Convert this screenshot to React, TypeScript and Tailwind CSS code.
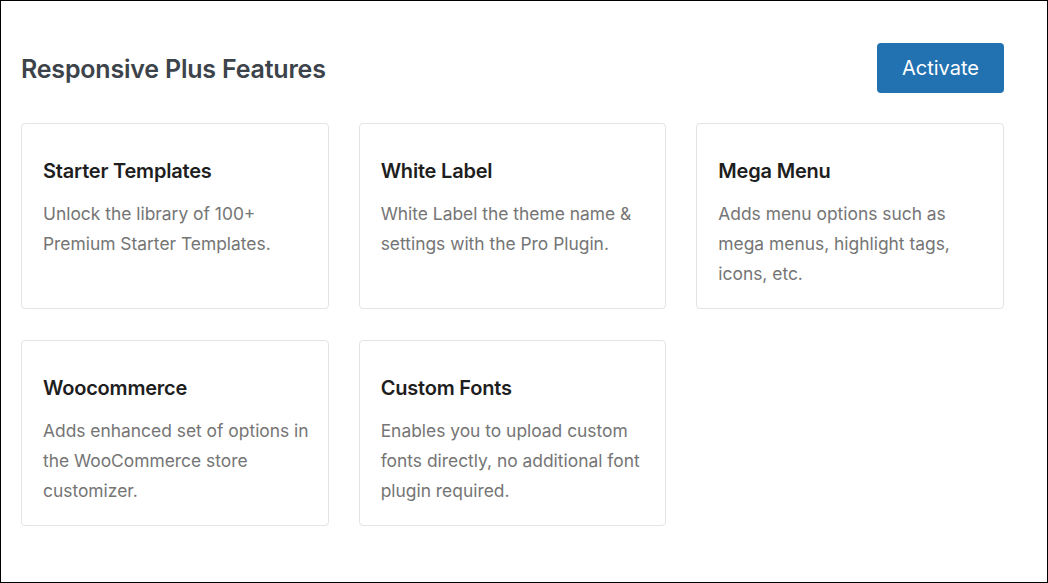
const features = [
  {
    title: "Starter Templates",
    description: "Unlock the library of 100+ Premium Starter Templates.",
  },
  {
    title: "White Label",
    description: "White Label the theme name & settings with the Pro Plugin.",
  },
  {
    title: "Mega Menu",
    description: "Adds menu options such as mega menus, highlight tags, icons, etc.",
  },
  {
    title: "Woocommerce",
    description: "Adds enhanced set of options in the WooCommerce store customizer.",
  },
  {
    title: "Custom Fonts",
    description: "Enables you to upload custom fonts directly, no additional font plugin required.",
  },
];

export default function App() {
  return (
    <div className="h-[583px] w-full border border-black bg-white font-['Inter',sans-serif]">
      <div className="pt-[42px] pl-[20px] w-[1003px]">
        {/* Header */}
        <div className="flex items-center justify-between h-[50px]">
          <h1 className="pt-[3px] text-[25px] font-semibold text-[#3c434a] tracking-[-0.2px]">
            Responsive Plus Features
          </h1>
          <button className="h-[50px] w-[127px] rounded-[4px] bg-[#2271b1] text-[20px] text-white">
            Activate
          </button>
        </div>

        {/* Cards */}
        <div className="mt-[30px] grid grid-cols-3 gap-x-[30px] gap-y-[31px]">
          {features.map((f) => (
            <div
              key={f.title}
              className="h-[186px] rounded-[4px] border border-[#e2e4e7] bg-white pt-[35px] pl-[21px] pr-[18px]"
            >
              <h2 className="text-[20px] leading-6 font-semibold text-[#1e1e1e] tracking-[-0.2px]">
                {f.title}
              </h2>
              <p className="mt-[16px] text-[17.4px] leading-[30px] text-[#757575]">
                {f.description}
              </p>
            </div>
          ))}
        </div>
      </div>
    </div>
  );
}
